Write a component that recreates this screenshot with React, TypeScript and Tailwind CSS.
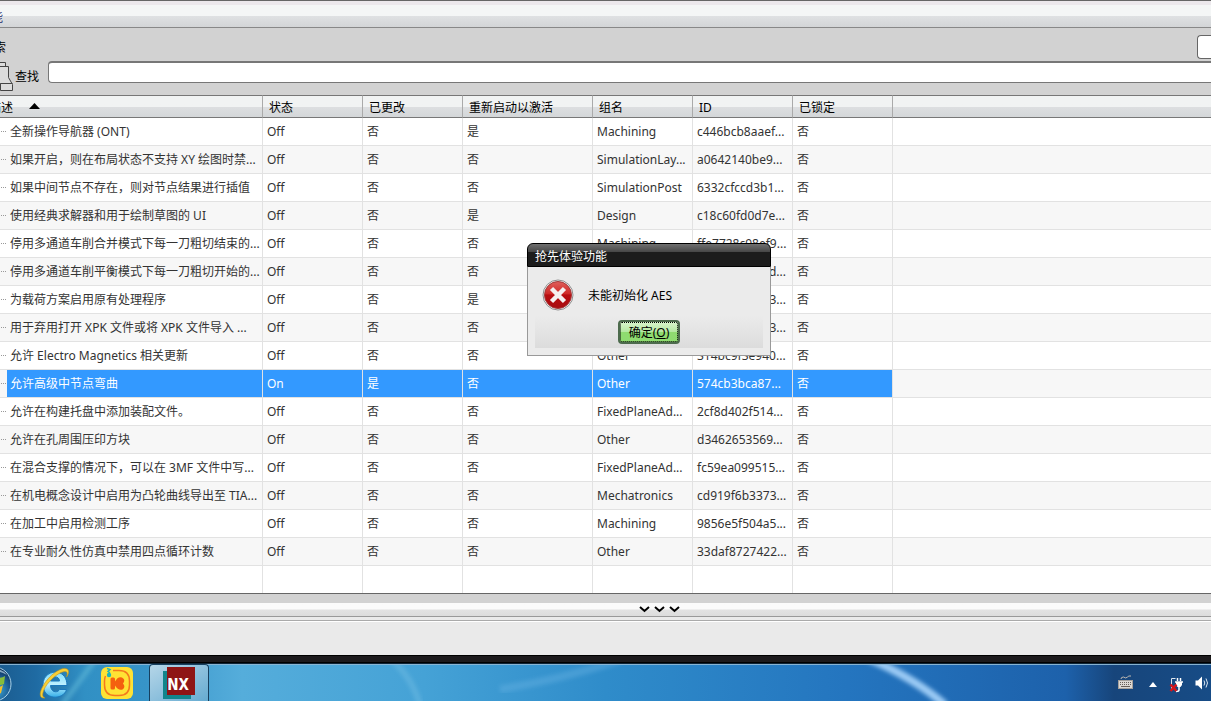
import React from "react";

interface Feature {
    name: string;
    state: string;
    changed: string;
    restart: string;
    group: string;
    id: string;
    selected?: boolean;
}

const features: Feature[] = [
    { name: "全新操作导航器 (ONT)", state: "Off", changed: "否", restart: "是", group: "Machining", id: "c446bcb8aaef..." },
    { name: "如果开启，则在布局状态不支持 XY 绘图时禁...", state: "Off", changed: "否", restart: "否", group: "SimulationLay...", id: "a0642140be9..." },
    { name: "如果中间节点不存在，则对节点结果进行插值", state: "Off", changed: "否", restart: "否", group: "SimulationPost", id: "6332cfccd3b1..." },
    { name: "使用经典求解器和用于绘制草图的 UI", state: "Off", changed: "否", restart: "是", group: "Design", id: "c18c60fd0d7e..." },
    { name: "停用多通道车削合并模式下每一刀粗切结束的...", state: "Off", changed: "否", restart: "否", group: "Machining", id: "ffe7728c98ef9..." },
    { name: "停用多通道车削平衡模式下每一刀粗切开始的...", state: "Off", changed: "否", restart: "否", group: "", id: "2d..." },
    { name: "为载荷方案启用原有处理程序", state: "Off", changed: "否", restart: "是", group: "", id: "3..." },
    { name: "用于弃用打开 XPK 文件或将 XPK 文件导入 ...", state: "Off", changed: "否", restart: "否", group: "", id: "3..." },
    { name: "允许 Electro Magnetics 相关更新", state: "Off", changed: "否", restart: "否", group: "Other", id: "314bc9f3e940..." },
    { name: "允许高级中节点弯曲", state: "On", changed: "是", restart: "否", group: "Other", id: "574cb3bca87...", selected: true },
    { name: "允许在构建托盘中添加装配文件。", state: "Off", changed: "否", restart: "否", group: "FixedPlaneAd...", id: "2cf8d402f514..." },
    { name: "允许在孔周围压印方块", state: "Off", changed: "否", restart: "否", group: "Other", id: "d3462653569..." },
    { name: "在混合支撑的情况下，可以在 3MF 文件中写...", state: "Off", changed: "否", restart: "否", group: "FixedPlaneAd...", id: "fc59ea099515..." },
    { name: "在机电概念设计中启用为凸轮曲线导出至 TIA...", state: "Off", changed: "否", restart: "否", group: "Mechatronics", id: "cd919f6b3373..." },
    { name: "在加工中启用检测工序", state: "Off", changed: "否", restart: "否", group: "Machining", id: "9856e5f504a5..." },
    { name: "在专业耐久性仿真中禁用四点循环计数", state: "Off", changed: "否", restart: "否", group: "Other", id: "33daf8727422..." },
];

const columns = ["状态", "已更改", "重新启动以激活", "组名", "ID", "已锁定"];

const BinocularsIcon = () => (
    <svg width="13" height="30" viewBox="0 0 13 30" fill="#dcdcdc" stroke="#444" strokeWidth="1">
        <path d="M-3 1.500H5.500V5.500H-3zM-3 5.500H8.500V16.500L12.500 23.500V29.500H.5V22.500H-3zM.5 22.500H12.500" />
    </svg>
);

const ErrorIcon = () => (
    <svg className="shrink-0" width="32" height="32" viewBox="0 0 32 32">
        <defs>
            <linearGradient id="errorFill" x1="0" y1="0" x2="0" y2="1">
                <stop offset="0" stopColor="#e0605c" />
                <stop offset=".45" stopColor="#cf2a28" />
                <stop offset=".5" stopColor="#b80d10" />
                <stop offset="1" stopColor="#a80c10" />
            </linearGradient>
        </defs>
        <circle cx="16" cy="16" r="15" fill="#f4f4f4" stroke="#8d8d8d" />
        <circle cx="16" cy="16" r="13.500" fill="url(#errorFill)" stroke="#a3393a" />
        <path d="M9.500 9.500L22.500 22.500M22.500 9.500L9.500 22.500" stroke="#f5f0f0" strokeWidth="4.500" />
    </svg>
);

const StartOrb = () => (
    <svg width="12" height="38" viewBox="0 0 12 38">
        <defs>
            <radialGradient id="orb" gradientUnits="userSpaceOnUse" cx="-4" cy="26" r="22">
                <stop offset="0" stopColor="#3fb0e0" />
                <stop offset=".6" stopColor="#1c5c92" />
                <stop offset="1" stopColor="#0d3157" />
            </radialGradient>
        </defs>
        <circle cx="-6" cy="20" r="17" fill="url(#orb)" stroke="#a9d3ea" />
        <path d="M-4 9Q-2 6 7 11A15 15 0 0 0 -4 5" fill="#b8d4e8" opacity=".7" />
        <path d="M-4 13Q1 15 5 12L4 20Q0 22-4 20z" fill="#86bd3c" />
        <path d="M-4 22Q0 24 3 21L1 29Q-2 31-5 29z" fill="#f6bf2a" />
    </svg>
);

const ExplorerIcon = () => (
    <svg width="32" height="32" viewBox="0 0 32 32">
        <defs>
            <linearGradient id="ieBlue" x1="0" y1="0" x2="0" y2="1">
                <stop offset="0" stopColor="#7fdcfb" />
                <stop offset=".5" stopColor="#bdf0ff" />
                <stop offset="1" stopColor="#35aee8" />
            </linearGradient>
        </defs>
        <path
            d="M29 18.500H12.500C12.800 26 20 26 21.500 22.500H28.500C26 33 5 34 5 17.500C5 2 29-.5 29 18.500ZM12.500 14H21.500C21.500 8.500 12.800 8.500 12.500 14Z"
            fill="url(#ieBlue)"
            stroke="#1b78bb"
        />
        <path d="M7 31C1 32 1 26 5 19C11 8 24-1 29 2C32 4 30 8 28.500 10C30 6 29 4 26.500 4.500C20 5 8 16 5.500 24C4 28 4.500 30 7 31Z" fill="#f9cf35" stroke="#c39319" strokeWidth=".6" />
    </svg>
);

const MusicIcon = () => (
    <svg width="32" height="32" viewBox="0 0 32 32">
        <rect width="32" height="32" rx="6" fill="#ffe234" />
        <path
            d="M12 3.500H18C25 3.500 28.500 7 28.500 14V18C28.500 25 25 28.500 18 28.500H14C7 28.500 3.500 25 3.500 18V14C3.500 12 4 10 4.500 9"
            fill="none"
            stroke="#f47a1d"
            strokeWidth="1.500"
        />
        <rect x="9.500" y="10.500" width="4.500" height="12" rx="1.500" fill="#f4600f" />
        <path d="M14 14.500Q17 9 21 10.500Q25 12.500 22 16.500Q25 20 21.500 22.500Q17.500 24 14 18.500z" fill="#f4600f" />
        <path d="M6 1.500L9 2.500L7 4.500L9 6" fill="none" stroke="#20b5b7" strokeWidth="1.500" />
        <circle cx="8" cy="8" r="2.200" fill="#20b5b7" />
    </svg>
);

const NxIcon = () => (
    <svg width="32" height="32" viewBox="0 0 32 32">
        <rect x="0" y="4" width="28" height="28" fill="#12858c" />
        <rect x="4" y="0" width="28" height="28" fill="#8e1515" />
        <text x="15" y="23" textAnchor="middle" fontFamily="'Liberation Sans Narrow', 'DejaVu Sans Condensed', sans-serif" fontWeight="700" fontSize="15" fill="#fff">
            NX
        </text>
    </svg>
);

const KeyboardIcon = () => (
    <svg width="15" height="15" viewBox="0 0 15 15">
        <path d="M3 4Q3 2 5.500 2Q8 4 9.500 2Q10.500 .5 13 1" fill="none" stroke="#bdb8b3" />
        <rect x=".5" y="5.500" width="14" height="8" fill="#ddd8d3" stroke="#a5a09b" />
        <path d="M2 7.500H13M2 9.500H13" stroke="#68605a" strokeDasharray="1 1" />
        <path d="M3 11.500H12" stroke="#68605a" />
    </svg>
);

const PowerIcon = () => (
    <svg width="14" height="16" viewBox="0 0 14 16">
        <path d="M6.500 1.500H2.500V12" fill="none" stroke="#dfe6ee" />
        <path d="M8.500 1V4M11.500 1V4M6 5H14" stroke="#fff" strokeWidth="1.500" />
        <path d="M7 5H13V8L11.500 10H8.500L7 8z" fill="#fff" />
        <path d="M10 10V13Q10 14.500 7 14.500" fill="none" stroke="#fff" strokeWidth="1.500" />
        <path d="M1.500 7.500L7.500 14M7.500 7.500L1.500 14" stroke="#d4151b" strokeWidth="2.500" />
    </svg>
);

const VolumeIcon = () => (
    <svg width="14" height="14" viewBox="0 0 14 14">
        <path d="M.5 4.500H3L7 .5V13.500L3 9.500H.5z" fill="#fff" />
        <path d="M9 4.500Q10.500 7 9 9.500M11 2.500Q14 7 11 11.500" fill="none" stroke="#dbe6f2" />
    </svg>
);

const FeatureRow: React.FC<{ feature: Feature }> = ({ feature }) => {
    const cell = feature.selected
        ? "border-r border-b border-[#e2e2e2] bg-[#3399ff] pl-1 text-white"
        : "border-r border-b border-[#e2e2e2] pl-1";
    return (
        <tr className="h-7 odd:bg-white even:bg-[#f7f7f7]">
            <td className="border-r border-b border-[#e2e2e2] p-0">
                <div className="flex items-center">
                    <span className="mr-px ml-px w-[5px] shrink-0 border-t border-dotted border-[#999]" />
                    <span className={feature.selected ? "h-[27px] flex-1 bg-[#3399ff] pl-[3px] leading-[27px] text-white" : "h-[27px] flex-1 pl-[3px] leading-[27px]"}>
                        {feature.name}
                    </span>
                </div>
            </td>
            <td className={cell}>{feature.state}</td>
            <td className={cell}>{feature.changed}</td>
            <td className={cell}>{feature.restart}</td>
            <td className={cell}>{feature.group}</td>
            <td className={feature.group ? cell : "border-r border-b border-[#e2e2e2] pr-1.5 text-right"}>{feature.id}</td>
            <td className={cell}>否</td>
            <td className="border-b border-[#e2e2e2]" />
        </tr>
    );
};

const FeatureTable = () => (
    <table className="w-full table-fixed border-separate border-spacing-0 whitespace-nowrap text-[#333]">
        <colgroup>
            <col className="w-[263px]" />
            <col className="w-[100px]" />
            <col className="w-[100px]" />
            <col className="w-[130px]" />
            <col className="w-[100px]" />
            <col className="w-[100px]" />
            <col className="w-[100px]" />
            <col />
        </colgroup>
        <thead className="text-left text-black">
            <tr className="h-[23px] bg-linear-to-b from-[#f1f3f3] from-50% via-[#dddfe1] via-50% to-[#d3d6d8]">
                <th className="overflow-hidden border-t border-r border-b border-[#777] border-r-[#aaa] p-0 font-normal">
                    <div className="-ml-[11px] flex items-center gap-4 pt-0.5">
                        描述
                        <svg className="mb-1" width="11" height="6" viewBox="0 0 11 6">
                            <path d="M5.500 0L11 6H0z" />
                        </svg>
                    </div>
                </th>
                {columns.map((column) => (
                    <th key={column} className="border-t border-r border-b border-[#777] border-r-[#aaa] p-0 pt-0.5 pl-1.5 font-normal">
                        {column}
                    </th>
                ))}
                <th className="border-t border-b border-[#777]" />
            </tr>
        </thead>
        <tbody>
            {features.map((feature) => (
                <FeatureRow key={feature.name} feature={feature} />
            ))}
            <tr className="h-[27px]">
                {columns.map((column) => (
                    <td key={column} className="border-r border-[#e2e2e2]" />
                ))}
                <td className="border-r border-[#e2e2e2]" />
                <td />
            </tr>
        </tbody>
    </table>
);

const ErrorDialog = () => (
    <div role="dialog" aria-labelledby="dialog-title" className="absolute top-[243px] left-[527px] w-[244px] text-black">
        <h2 id="dialog-title" className="h-6 rounded-t-md border border-black bg-linear-to-b from-[#707070] via-[#484848] via-35% to-[#1c1c1c] to-35% pl-[7px] leading-[26px] text-white">
            抢先体验功能
        </h2>
        <div className="border border-t-0 border-[#999] bg-[#ebebeb] p-[7px]">
            <div className="flex h-[42px] items-center gap-3.5 pl-[7px]">
                <ErrorIcon />
                <p className="pt-0.5">未能初始化 AES</p>
            </div>
            <div className="flex h-8 justify-center bg-linear-to-b from-[#ebebeb] to-[#dcdcdc] pt-1">
                <button className="h-6 w-[62px] rounded-sm border-2 border-[#4d6b4d] bg-linear-to-b from-[#d9f5cd] via-[#b4e8a0] via-50% to-[#8fdc70] to-50% pt-0.5 leading-4 outline-1 -outline-offset-3 outline-dotted outline-black">
                    确定(<span className="underline">O</span>)
                </button>
            </div>
        </div>
    </div>
);

const Taskbar = () => (
    <footer className="relative flex h-[38px] items-center overflow-hidden border-t border-[#0d2436] text-white">
        <svg className="absolute inset-0 h-full w-full" viewBox="0 0 1211 38" preserveAspectRatio="none">
            <defs>
                <linearGradient id="sky">
                    <stop offset="0" stopColor="#1b5d91" />
                    <stop offset=".03" stopColor="#1f6ba3" />
                    <stop offset=".07" stopColor="#3190c4" />
                    <stop offset=".12" stopColor="#3794c8" />
                    <stop offset=".2" stopColor="#55addb" />
                    <stop offset=".35" stopColor="#45a2d6" />
                    <stop offset=".5" stopColor="#2f8cca" />
                    <stop offset=".7" stopColor="#2475bf" />
                    <stop offset=".88" stopColor="#1d61ab" />
                    <stop offset=".92" stopColor="#17457b" />
                    <stop offset="1" stopColor="#174c86" />
                </linearGradient>
                <filter id="soft">
                    <feGaussianBlur stdDeviation="2" />
                </filter>
            </defs>
            <rect width="1211" height="38" fill="url(#sky)" />
            <path d="M868 -6Q915 15 945 42" stroke="#9bcbf5" strokeWidth="8" fill="none" filter="url(#soft)" />
            <path d="M95 -4L62 42" stroke="#64bcd9" strokeWidth="5" opacity=".6" filter="url(#soft)" />
            <path d="M392 -4Q412 14 420 42" stroke="#7cc3e6" strokeWidth="6" opacity=".4" fill="none" filter="url(#soft)" />
            <path d="M500 26Q560 16 620 -4" stroke="#6ab4e4" strokeWidth="8" opacity=".4" fill="none" filter="url(#soft)" />
            <path d="M0 .5H1211" stroke="#8bb6d3" />
        </svg>
        <button aria-label="开始" className="relative">
            <StartOrb />
        </button>
        <button aria-label="Internet Explorer" className="relative ml-[26px]">
            <ExplorerIcon />
        </button>
        <button aria-label="音乐" className="relative ml-[31px]">
            <MusicIcon />
        </button>
        <button aria-label="NX" className="relative ml-4 flex h-full w-[60px] items-center justify-center rounded-t-sm border border-b-0 border-[#17405f] bg-linear-to-br from-[#b5d6e8] to-[#65abd1]">
            <NxIcon />
        </button>
        <div className="relative ml-auto flex items-center pr-0.5">
            <KeyboardIcon />
            <svg className="ml-4 mt-1" width="8" height="5" viewBox="0 0 8 5">
                <path d="M4 0L8 5H0z" fill="#fff" />
            </svg>
            <span className="mt-1 mr-3 ml-3">
                <PowerIcon />
            </span>
            <VolumeIcon />
        </div>
    </footer>
);

const App: React.FC = () => {
    return (
        <div className="relative min-h-screen overflow-hidden bg-[#eaeaea] font-['Noto_Sans','Noto_Sans_CJK_SC',sans-serif] text-xs leading-4">
            <div className="h-[5px] border-t border-[#666] bg-[#ece8ec]" />
            <header className="h-[23px] overflow-hidden border-b border-[#888] bg-linear-to-b from-[#f4f6f6] from-50% via-[#dfe1e3] via-50% to-[#d3d5d7]">
                <h1 className="-ml-[9px] leading-[25px] text-[#1a2a6c]">能</h1>
            </header>
            <section className="bg-[#d2d2d2] pb-3">
                <div className="flex h-[33px] items-center justify-between pt-1">
                    <label htmlFor="search" className="-ml-[18px] pt-0.5">搜索</label>
                    <input id="search" className="h-6 w-3.5 rounded-l-sm border border-r-0 border-[#666] bg-white" />
                </div>
                <div className="flex h-[22px]">
                    <BinocularsIcon />
                    <label htmlFor="find" className="ml-0.5 w-[33px] pt-2">查找</label>
                    <input id="find" className="h-[22px] flex-1 rounded-l-sm border border-t-2 border-r-0 border-[#777] bg-white" />
                </div>
            </section>
            <main className="bg-white">
                <FeatureTable />
            </main>
            <div className="h-2.5 border-t border-[#666] bg-[#d2d2d2]" />
            <button aria-label="展开" className="flex h-3.5 w-full justify-center border-b border-[#999] bg-linear-to-b from-[#fbfbfb] from-45% via-[#e2e2e2] via-55% to-[#dcdcdc] pt-[3px] pl-[108px]">
                <svg width="42" height="7" viewBox="0 0 42 7" fill="none" stroke="#000" strokeWidth="2">
                    <path d="M1 1L5.500 5L10 1M16 1L20.500 5L25 1M31 1L35.500 5L40 1" />
                </svg>
            </button>
            <div className="h-1 border-b border-[#aaa] bg-[#eaeaea]" />
            <div className="h-[34px] border-t border-white" />
            <div className="h-2 border-t border-b border-black bg-[#1c1a1c]" />
            <Taskbar />
            <ErrorDialog />
        </div>
    );
};

export default App;
